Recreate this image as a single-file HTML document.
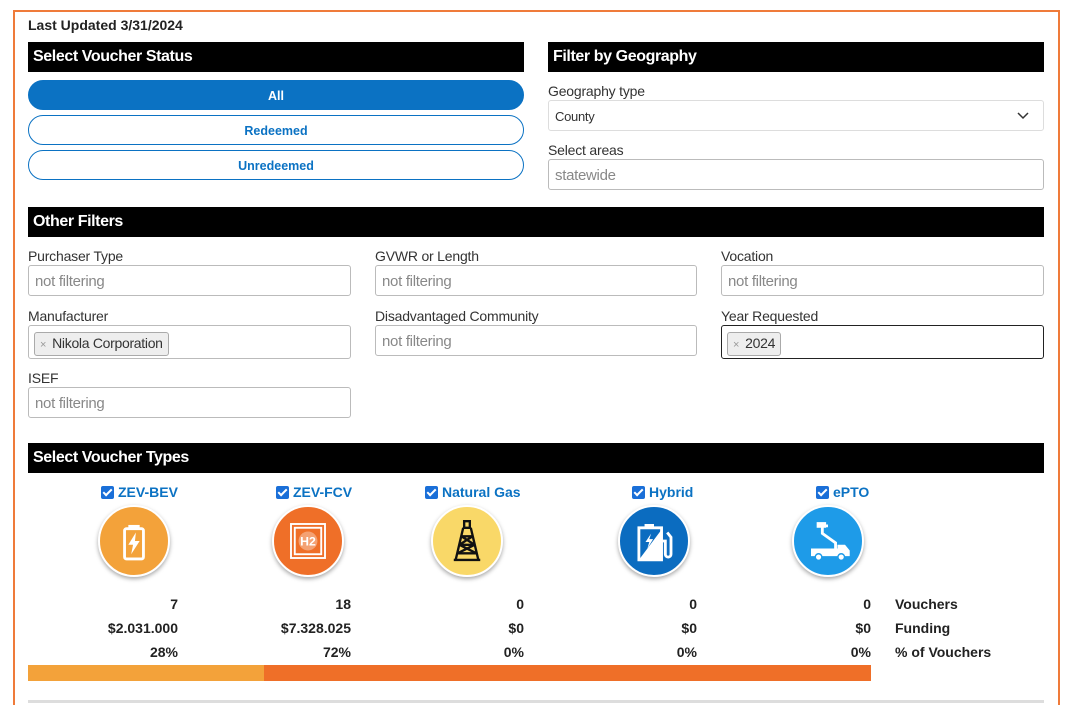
<!DOCTYPE html>
<html><head><meta charset="utf-8"><style>
*{box-sizing:border-box;margin:0;padding:0}
html,body{width:1073px;height:705px;overflow:hidden}
body{background:#fff;position:relative;font-family:"Liberation Sans",sans-serif;color:#222}
.a{position:absolute}
.frame{left:13px;top:10px;width:1047px;height:695px;border:2px solid #ef7b3a;border-bottom:none}
.hd{background:#000;color:#fff;font-weight:bold;font-size:16px;height:30px;line-height:30px;padding-left:5px;letter-spacing:-0.4px}
.btn{border:1px solid #0b72c3;border-radius:16px;height:30px;line-height:30px;text-align:center;color:#0b72c3;font-weight:bold;font-size:12.5px}
.lbl{font-size:14px;color:#333;letter-spacing:-0.2px}
.inp{border:1px solid #bbb;border-radius:3px;height:31px;line-height:31px;padding-left:6px;font-size:15px;color:#888;letter-spacing:-0.3px}
.tag{display:inline-block;background:#eee;border:1px solid #aaa;border-radius:3px;color:#333;font-size:14px;line-height:20px;padding:0 5px;margin-top:6px;margin-left:-1px}
.tag span{color:#999;font-size:11px;margin-right:6px}
.cb{font-weight:bold;color:#0b72c3;font-size:14px;white-space:nowrap}
.cb i{display:inline-block;width:13px;height:13px;background:#1a6fd8;border-radius:2px;vertical-align:-2px;margin-right:4px;position:relative}
.cb i:after{content:"";position:absolute;left:4px;top:1px;width:3px;height:7px;border:solid #fff;border-width:0 2px 2px 0;transform:rotate(45deg)}
.ci{width:72px;height:72px;border-radius:50%;box-shadow:0 2px 4px rgba(0,0,0,.35);border:2px solid #fff}
.ci svg{width:100%;height:100%}
.st{font-weight:bold;font-size:14px;text-align:right;width:150px;color:#222}
.sl{font-weight:bold;font-size:14px;color:#222}
</style></head><body>
<div class="a frame"></div>
<div class="a" style="left:28px;top:17px;font-weight:bold;font-size:14px">Last Updated 3/31/2024</div>

<div class="a hd" style="left:28px;top:42px;width:496px">Select Voucher Status</div>
<div class="a btn" style="left:28px;top:80px;width:496px;background:#0b72c3;color:#fff">All</div>
<div class="a btn" style="left:28px;top:115px;width:496px">Redeemed</div>
<div class="a btn" style="left:28px;top:150px;width:496px">Unredeemed</div>

<div class="a hd" style="left:548px;top:42px;width:496px">Filter by Geography</div>
<div class="a lbl" style="left:548px;top:83px">Geography type</div>
<div class="a inp" style="left:548px;top:100px;width:496px;color:#333;font-size:13px;border-color:#ddd">County<svg style="position:absolute;right:14px;top:11px" width="12" height="8"><path d="M1 1 L6 6 L11 1" stroke="#333" stroke-width="1.5" fill="none"/></svg></div>
<div class="a lbl" style="left:548px;top:142px">Select areas</div>
<div class="a inp" style="left:548px;top:159px;width:496px">statewide</div>

<div class="a hd" style="left:28px;top:207px;width:1016px">Other Filters</div>
<div class="a lbl" style="left:28px;top:248px">Purchaser Type</div>
<div class="a inp" style="left:28px;top:265px;width:323px">not filtering</div>
<div class="a lbl" style="left:375px;top:248px">GVWR or Length</div>
<div class="a inp" style="left:375px;top:265px;width:322px">not filtering</div>
<div class="a lbl" style="left:721px;top:248px">Vocation</div>
<div class="a inp" style="left:721px;top:265px;width:323px">not filtering</div>

<div class="a lbl" style="left:28px;top:308px">Manufacturer</div>
<div class="a inp" style="left:28px;top:325px;width:323px;height:34px"><div class="tag"><span>×</span>Nikola Corporation</div></div>
<div class="a lbl" style="left:375px;top:308px">Disadvantaged Community</div>
<div class="a inp" style="left:375px;top:325px;width:322px">not filtering</div>
<div class="a lbl" style="left:721px;top:308px">Year Requested</div>
<div class="a inp" style="left:721px;top:325px;width:323px;height:34px;border-color:#222"><div class="tag"><span>×</span>2024</div></div>

<div class="a lbl" style="left:28px;top:370px">ISEF</div>
<div class="a inp" style="left:28px;top:387px;width:323px">not filtering</div>

<div class="a hd" style="left:28px;top:443px;width:1016px">Select Voucher Types</div>

<div class="a cb" style="left:101px;top:484px"><i></i>ZEV-BEV</div>
<div class="a cb" style="left:276px;top:484px"><i></i>ZEV-FCV</div>
<div class="a cb" style="left:425px;top:484px"><i></i>Natural Gas</div>
<div class="a cb" style="left:632px;top:484px"><i></i>Hybrid</div>
<div class="a cb" style="left:816px;top:484px"><i></i>ePTO</div>

<div class="a ci" style="left:98px;top:505px;background:#f3a23a"><svg viewBox="0 0 72 72"><rect x="30" y="19" width="12" height="3" fill="#fff"/><rect x="26" y="23" width="20" height="32" rx="2" fill="none" stroke="#fff" stroke-width="3"/><path d="M38 27 L30 40 L35 40 L33 50 L42 36 L37 36 Z" fill="#fff"/></svg></div>
<div class="a ci" style="left:272px;top:505px;background:#ef6f28"><svg viewBox="0 0 72 72"><rect x="18" y="18" width="36" height="36" fill="none" stroke="#fff" stroke-width="2"/><rect x="22" y="22" width="28" height="28" fill="none" stroke="#fff" stroke-width="2"/><circle cx="36" cy="36" r="10" fill="#fff" opacity=".35"/><text x="36" y="41" text-anchor="middle" font-size="13" font-weight="bold" fill="#fff" font-family="Liberation Sans">H2</text></svg></div>
<div class="a ci" style="left:431px;top:505px;background:#f9d868"><svg viewBox="0 0 72 72"><g stroke="#111" stroke-width="2.5" fill="none"><path d="M33 15 h6 v7 h-6z"/><path d="M32 22 L24 56 M40 22 L48 56"/><path d="M30 31 h12 M28 40 h16 M26 49 h20"/><path d="M30 31 L44 40 M42 31 L28 40 M28 40 L46 49 M44 40 L26 49"/><path d="M22 56 h28"/></g></svg></div>
<div class="a ci" style="left:618px;top:505px;background:#0b6cc0"><svg viewBox="0 0 72 72"><path d="M20 22 h24 v34 h-24z" fill="none" stroke="#fff" stroke-width="3"/><rect x="26" y="18" width="10" height="4" fill="#fff"/><path d="M44 56 L20 56 L44 24z" fill="#fff"/><path d="M33 28 L27 37 L31 37 L29 44 L35 34 L31 34z" fill="#fff"/><path d="M44 36 h4 v14 a3 3 0 0 0 6 0 v-18 l-4 -5" fill="none" stroke="#fff" stroke-width="3"/></svg></div>
<div class="a ci" style="left:792px;top:505px;background:#1e9be8"><svg viewBox="0 0 72 72"><path d="M26 20 L36 20 M30 20 L30 28 L44 38 L44 44" stroke="#fff" stroke-width="3" fill="none"/><rect x="24" y="16" width="10" height="6" fill="#fff"/><path d="M18 44 h28 v-4 h8 l5 6 v6 h-41z" fill="#fff"/><circle cx="26" cy="53" r="3.5" fill="#fff" stroke="#1e9be8" stroke-width="1.5"/><circle cx="50" cy="53" r="3.5" fill="#fff" stroke="#1e9be8" stroke-width="1.5"/></svg></div>

<div class="a st" style="left:28px;top:596px">7</div>
<div class="a st" style="left:28px;top:620px">$2.031.000</div>
<div class="a st" style="left:28px;top:644px">28%</div>
<div class="a st" style="left:201px;top:596px">18</div>
<div class="a st" style="left:201px;top:620px">$7.328.025</div>
<div class="a st" style="left:201px;top:644px">72%</div>
<div class="a st" style="left:374px;top:596px">0</div>
<div class="a st" style="left:374px;top:620px">$0</div>
<div class="a st" style="left:374px;top:644px">0%</div>
<div class="a st" style="left:547px;top:596px">0</div>
<div class="a st" style="left:547px;top:620px">$0</div>
<div class="a st" style="left:547px;top:644px">0%</div>
<div class="a st" style="left:721px;top:596px">0</div>
<div class="a st" style="left:721px;top:620px">$0</div>
<div class="a st" style="left:721px;top:644px">0%</div>
<div class="a sl" style="left:895px;top:596px">Vouchers</div>
<div class="a sl" style="left:895px;top:620px">Funding</div>
<div class="a sl" style="left:895px;top:644px">% of Vouchers</div>

<div class="a" style="left:28px;top:665px;width:236px;height:16px;background:#f3a23a"></div>
<div class="a" style="left:264px;top:665px;width:607px;height:16px;background:#ef6f28"></div>
<div class="a" style="left:28px;top:700px;width:1016px;height:3px;background:#ddd"></div>
</body></html>
